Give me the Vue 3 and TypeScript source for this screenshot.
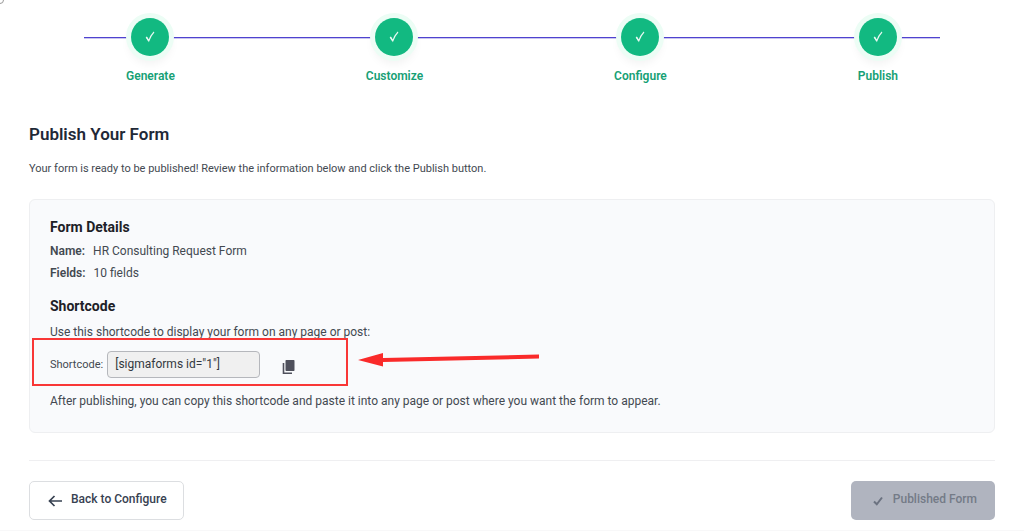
<script setup lang="ts">
import { ref } from 'vue'

const steps: string[] = ['Generate', 'Customize', 'Configure', 'Publish']
const details: { label: string; value: string }[] = [
  { label: 'Name:', value: 'HR Consulting Request Form' },
  { label: 'Fields:', value: '10 fields' },
]
const shortcode = ref('[sigmaforms id="1"]')

function copyShortcode(): void {
  navigator.clipboard?.writeText(shortcode.value)
}
</script>

<template>
  <main class="page">
    <span class="corner" aria-hidden="true"></span>
    <ol class="steps">
      <li v-for="step in steps" :key="step" class="step">
        <span class="dot">
          <svg width="12" height="12" viewBox="0 0 12 12" aria-hidden="true">
            <path d="M2.300 6 L4.800 9.900 Q6.600 4.500 10 1" fill="none" stroke="#e6f8f1" stroke-width="1.100" />
            <path d="M2.300 6 L4.800 9.800" fill="none" stroke="#e6f8f1" stroke-width="1.400" />
          </svg>
        </span>
        <span class="step-label">{{ step }}</span>
      </li>
    </ol>

    <h1>Publish Your Form</h1>
    <p class="intro">Your form is ready to be published! Review the information below and click the Publish button.</p>

    <section class="card">
      <h2>Form Details</h2>
      <dl class="details">
        <div v-for="item in details" :key="item.label" class="detail">
          <dt>{{ item.label }}</dt>
          <dd>{{ item.value }}</dd>
        </div>
      </dl>

      <h2>Shortcode</h2>
      <p class="hint">Use this shortcode to display your form on any page or post:</p>
      <div class="code-row">
        <label for="shortcode">Shortcode:</label>
        <input id="shortcode" v-model="shortcode" type="text" readonly />
        <button class="copy" type="button" aria-label="Copy shortcode" @click="copyShortcode">
          <svg width="13" height="16" viewBox="0 0 13 16" aria-hidden="true">
            <path d="M4.200 1h7.600a.7.7 0 0 1 .7.7v9.600a.7.7 0 0 1-.7.700H4.200a.7.700 0 0 1-.7-.700V1.700a.7.700 0 0 1 .7-.700z" fill="#4f505c" />
            <path d="M1.500 4v10.200h8.500" fill="none" stroke="#4f505c" stroke-width="1.600" />
          </svg>
        </button>
        <span class="marker" aria-hidden="true"></span>
        <svg class="arrow" width="182" height="16" viewBox="0 0 182 16" aria-hidden="true">
          <path d="M0 9 L25 2 V7 L181 3.500 V7.500 L25 11 V15.500 Z" fill="#fa2a2a" />
        </svg>
      </div>
      <p class="after">After publishing, you can copy this shortcode and paste it into any page or post where you want the form to appear.</p>
    </section>

    <footer class="actions">
      <button class="btn back" type="button">
        <svg width="15" height="12" viewBox="0 0 15 12" aria-hidden="true">
          <path d="M14 6H1.500M6.500 1L1.500 6l5 5" fill="none" stroke="#374151" stroke-width="1.700" />
        </svg>
        Back to Configure
      </button>
      <button class="btn published" type="button" disabled>
        <svg width="10" height="10" viewBox="0 0 10 10" aria-hidden="true">
          <path d="M1 5.500L3.800 8.300L9 1.500" fill="none" stroke="#6b7280" stroke-width="2" />
        </svg>
        Published Form
      </button>
    </footer>
  </main>
</template>

<style>
body {
  margin: 0;
  background: #fff;
}
</style>

<style scoped>
.page {
  position: relative;
  box-sizing: border-box;
  padding: 18px 29px 10px;
  overflow: hidden;
  border-bottom: 1px solid #f8f8f9;
  font-family: Roboto, "Liberation Sans", sans-serif;
  font-size: 12px;
  line-height: 18px;
  color: #434951;
}
.corner {
  position: absolute;
  top: -4px;
  left: -4px;
  width: 6px;
  height: 6px;
  border: 1px solid #999;
  border-radius: 50%;
}
h1, h2, p, dl, dd {
  margin: 0;
}
.steps {
  position: relative;
  display: flex;
  justify-content: space-between;
  margin: 0 55px;
  padding: 0 42px;
  list-style: none;
}
.steps::before {
  content: "";
  position: absolute;
  top: 19px;
  left: 0;
  right: 0;
  height: 1px;
  background: #4f43cf;
  box-shadow: 0 1px #c9c5f0;
}
.step {
  position: relative;
  display: flex;
  flex-direction: column;
  align-items: center;
  gap: 11px;
}
.dot {
  display: flex;
  align-items: center;
  justify-content: center;
  width: 38px;
  height: 38px;
  border-radius: 50%;
  background: #12b981;
  box-shadow: 0 0 0 5px #ecfdf5, 0 6px 10px 2px rgba(0, 0, 0, 0.05);
}
.step-label {
  font-weight: 600;
  color: #16a075;
}
h1 {
  margin-top: 37px;
  font-size: 17px;
  font-weight: 600;
  line-height: 24px;
  color: #1f2937;
}
.intro {
  margin-top: 14px;
  font-size: 11px;
}
.card {
  margin-top: 21px;
  padding: 17px 20px 22px;
  border: 1px solid #eeeff1;
  border-radius: 6px;
  background: #f9fafc;
}
h2 {
  font-size: 14px;
  font-weight: 700;
  line-height: 20px;
  color: #1d2127;
}
.details {
  display: grid;
  gap: 4px;
  margin: 5px 0 14px;
}
.detail {
  display: flex;
  gap: 8px;
}
dt {
  font-weight: 600;
}
.hint {
  margin-top: 7px;
}
.code-row {
  position: relative;
  display: flex;
  align-items: center;
  gap: 4px;
  margin-top: 10px;
}
.code-row label {
  font-size: 11px;
}
.code-row input {
  box-sizing: border-box;
  width: 153px;
  height: 27px;
  padding: 0 7px 2px;
  border: 1px solid #b5b7bc;
  border-radius: 4px;
  background: #f0f0f0;
  font: inherit;
  color: #343940;
}
.copy {
  display: flex;
  align-items: center;
  justify-content: center;
  width: 48px;
  height: 27px;
  padding: 5px 0 0;
  border: 0;
  background: none;
}
.marker {
  position: absolute;
  top: -13px;
  left: -18px;
  box-sizing: border-box;
  width: 316px;
  height: 48px;
  border: 2px solid #f93636;
}
.arrow {
  position: absolute;
  top: 0;
  left: 308px;
}
.after {
  margin-top: 14px;
}
.actions {
  display: flex;
  justify-content: space-between;
  margin-top: 27px;
  padding-top: 20px;
  border-top: 1px solid #efeff1;
}
.btn {
  display: flex;
  align-items: center;
  box-sizing: border-box;
  height: 39px;
  border-radius: 5px;
  font: inherit;
  font-weight: 500;
}
.back {
  gap: 8px;
  padding: 0 16px 3px 18px;
  border: 1px solid #dcdee1;
  background: #fff;
  color: #374151;
}
.published {
  gap: 10px;
  padding: 0 18px 3px 22px;
  border: 0;
  background: #b0b4bf;
  color: #747b87;
}
.btn svg {
  margin-top: 3px;
}
</style>
